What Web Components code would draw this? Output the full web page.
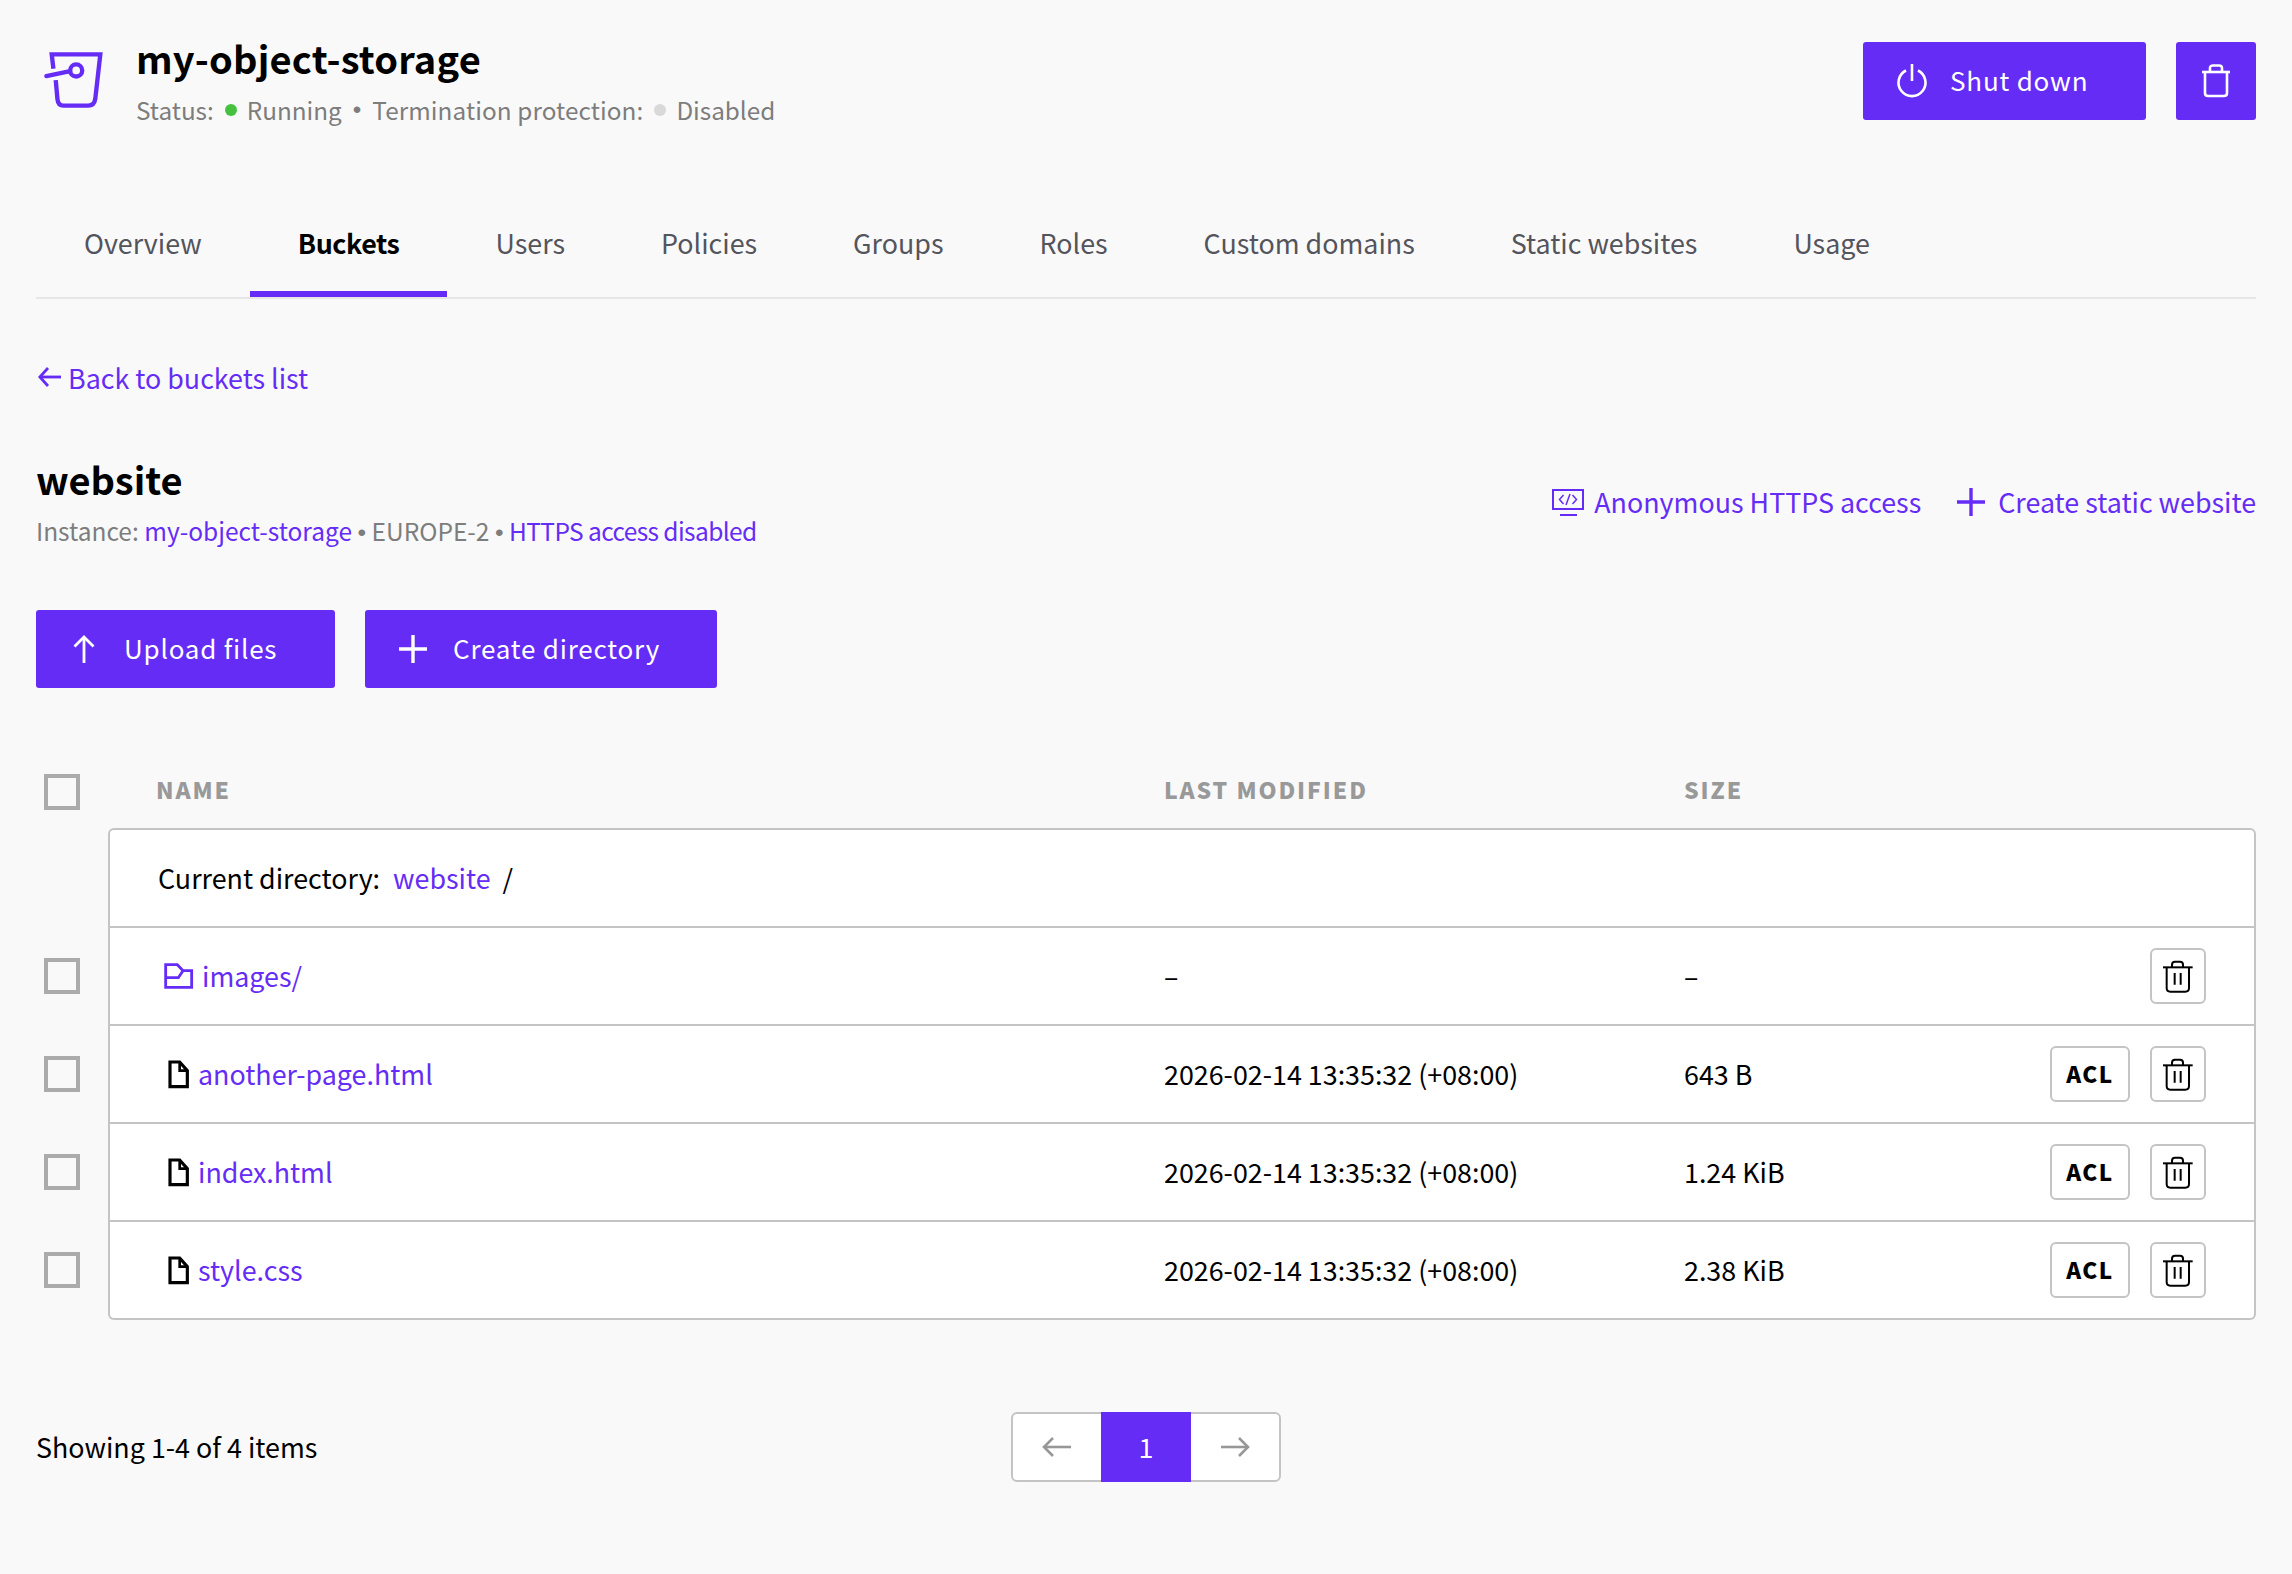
<!DOCTYPE html>
<html lang="en">
<head>
<meta charset="utf-8">
<title>my-object-storage</title>
<style>
  html, body { margin: 0; background: #f9f9f9; }
  body { font-family: "Noto Sans CJK SC", "Noto Sans", sans-serif; color: #000; }
</style>
</head>
<body>
<bucket-page></bucket-page>

<script>
const PURPLE = "#652cf6";
const FONT = '"Noto Sans CJK SC", "Noto Sans", sans-serif';
const BULLET = '<span style="font-family:\'Liberation Sans\',sans-serif">•</span>';

const ICONS = {
  logo: `<svg width="67" height="67" viewBox="60 80 200 200" fill="none" stroke="${PURPLE}" stroke-width="13" stroke-linecap="round"><path stroke-linecap="butt" d="M100 148 L95 105 H240 L225 238 Q222 258 204 258 H130 Q114 258 112 238 L107 182"/><path d="M79 170 L150 155"/><circle cx="168" cy="153" r="18"/></svg>`,
  power: `<svg width="32" height="34" viewBox="0 0 32 34" fill="none" stroke="#fff" stroke-width="2.6"><path d="M10 6.5 A13.5 13.5 0 1 0 22 6.5"/><path d="M16 0 V17"/></svg>`,
  trashWhite: `<svg width="30" height="34" viewBox="0 0 30 34" fill="none" stroke="#fff" stroke-width="2.6"><path d="M1 8 H29"/><path d="M4 8 V29 Q4 32 7 32 H23 Q26 32 26 29 V8"/><path d="M9 8 V4 Q9 1.5 12 1.5 H18 Q21 1.500 21 4 V8"/></svg>`,
  trash: `<svg width="34" height="35" viewBox="635 115 100 105" fill="none" stroke="#000" stroke-width="6"><path d="M640 140 H729"/><path d="M651 140 V202 Q651 213 662 213 H707 Q718 213 718 202 V140"/><path d="M667 140 V132 Q667 123 676 123 H691 Q700 123 700 132 V140"/><path d="M675 157 V192 M693 157 V192"/></svg>`,
  back: `<svg width="24" height="20" viewBox="0 0 24 20" fill="none" stroke="${PURPLE}" stroke-width="2.8"><path d="M23 10 H2"/><path d="M10 1 L1.800 10 L10 19"/></svg>`,
  up: `<svg width="22" height="28" viewBox="0 0 22 28" fill="none" stroke="#fff" stroke-width="2.8"><path d="M11 28 V2"/><path d="M1.500 11.500 L11 2 L20.500 11.500"/></svg>`,
  plusWhite: `<svg width="28" height="28" viewBox="0 0 28 28" fill="none" stroke="#fff" stroke-width="3.400"><path d="M0 14 H28 M14 0 V28"/></svg>`,
  plus: `<svg width="28" height="28" viewBox="0 0 28 28" fill="none" stroke="${PURPLE}" stroke-width="3.400"><path d="M0 14 H28 M14 0 V28"/></svg>`,
  monitor: `<svg width="32" height="27" viewBox="0 0 32 27" fill="none" stroke="${PURPLE}" stroke-width="2"><rect x="1" y="1" width="30" height="19"/><path d="M8 26 H25" stroke-width="2"/><path d="M11.500 6 L7.500 10.500 L11.500 15 M20.500 6 L24.500 10.500 L20.500 15 M18 5 L14 16" stroke-width="1.500"/></svg>`,
  folder: `<svg width="30" height="28" viewBox="70 39 90 84" fill="none" stroke="${PURPLE}" stroke-width="8.500"><path d="M75 115 V47 H110 L127 65 H153 V115 Z"/><path d="M75 86 H113 L127 65"/></svg>`,
  file: `<svg width="22" height="29" viewBox="83 328 66 87" fill="none" stroke="#000" stroke-width="9.500"><path d="M89 408 V334 H118 L141 360 V408 Z"/><path d="M118 334 V360 H141" stroke-width="8"/></svg>`,
  arrowLeft: `<svg width="30" height="22" viewBox="0 0 30 22" fill="none" stroke="#979797" stroke-width="2.600"><path d="M29 11 H2"/><path d="M11 2 L2 11 L11 20"/></svg>`,
  arrowRight: `<svg width="30" height="22" viewBox="0 0 30 22" fill="none" stroke="#979797" stroke-width="2.600"><path d="M1 11 H28"/><path d="M19 2 L28 11 L19 20"/></svg>`,
};

class BaseElement extends HTMLElement {
  constructor() {
    super();
    this.attachShadow({ mode: "open" });
  }
}

class UiButton extends BaseElement {
  connectedCallback() {
    const icon = this.getAttribute("icon");
    const gap = this.getAttribute("gap") || "28";
    this.shadowRoot.innerHTML = `
      <style>
        :host {
          display: inline-flex;
          align-items: center;
          box-sizing: border-box;
          height: 78px;
          background: ${PURPLE};
          border-radius: 3px;
          color: #fff;
          font: 400 26px/36px ${FONT};
          letter-spacing: 0.8px;
        }
        .icon { display: flex; margin-right: ${gap}px; }
        .label { margin-top: -2px; }
      </style>
      <span class="icon">${ICONS[icon]}</span><span class="label"><slot></slot></span>
    `;
  }
}
customElements.define("ui-button", UiButton);

class ObjHeader extends BaseElement {
  connectedCallback() {
    this.shadowRoot.innerHTML = `
      <style>
        :host { display: flex; align-items: flex-start; padding-top: 36px; height: 155px; box-sizing: border-box; }
        .logo { display: flex; margin: 10px 29px 0 4px; }
        .main { flex: 1; }
        h1 { margin: -2px 0 0; font: 700 38px/48px ${FONT}; letter-spacing: 0.2px; }
        .status { margin-top: 10px; display: flex; align-items: center; font-size: 24.3px; line-height: 36px; color: #7d7d7d; }
        .dot { width: 12px; height: 12px; border-radius: 50%; margin: 0 10px 0 11px; }
        .green { background: #46c13f; }
        .grey { background: #d9d9d9; }
        .sep { margin: 0 11px 0 11px; display: flex; }
        .term { letter-spacing: 0.1px; }
        .actions { display: flex; gap: 30px; margin-top: 6px; }
        .shut { width: 283px; padding-left: 33px; box-sizing: border-box; }
        .del { display: flex; align-items: center; justify-content: center; width: 80px; height: 78px; background: ${PURPLE}; border-radius: 3px; }
      </style>
      <span class="logo">${ICONS.logo}</span>
      <div class="main">
        <h1>my-object-storage</h1>
        <div class="status">
          <span>Status:</span><span class="dot green"></span><span>Running</span>
          <span class="sep">${BULLET}</span>
          <span class="term">Termination protection:</span><span class="dot grey"></span><span>Disabled</span>
        </div>
      </div>
      <div class="actions">
        <ui-button class="shut" icon="power" gap="22">Shut down</ui-button>
        <span class="del">${ICONS.trashWhite}</span>
      </div>
    `;
  }
}
customElements.define("obj-header", ObjHeader);

class ObjTabs extends BaseElement {
  connectedCallback() {
    const tabs = ["Overview", "Buckets", "Users", "Policies", "Groups", "Roles", "Custom domains", "Static websites", "Usage"];
    const active = this.getAttribute("active");
    this.shadowRoot.innerHTML = `
      <style>
        :host { display: flex; height: 108px; box-sizing: border-box; border-bottom: 2px solid #e6e6e6; margin-top: 36px; }
        a { display: block; padding: 34px 48px 0; height: 106px; box-sizing: border-box; font-size: 26.85px; line-height: 36px; color: #54545c; }
        a.on { color: #000; font-weight: 700; letter-spacing: -0.4px; border-bottom: 6px solid ${PURPLE}; }
      </style>
      ${tabs.map((t) => `<a class="${t === active ? "on" : ""}">${t}</a>`).join("")}
    `;
  }
}
customElements.define("obj-tabs", ObjTabs);

class BucketTitle extends BaseElement {
  connectedCallback() {
    this.shadowRoot.innerHTML = `
      <style>
        :host { display: block; color: ${PURPLE}; }
        .back { display: flex; align-items: center; gap: 6px; margin-top: 59px; font-size: 26.85px; line-height: 36px; }
        .back svg { margin-left: 2px; }
        .back span { padding-top: 2px; }
        .row { display: flex; align-items: center; justify-content: space-between; margin-top: 59px; }
        h2 { margin: 0; font: 700 38px/48px ${FONT}; color: #000; }
        .info { margin-top: 12px; font-size: 24.5px; line-height: 32px; color: #7d7d7d; }
        .info a { color: ${PURPLE}; }
        .info a.tight { letter-spacing: -0.6px; }
        .links { display: flex; align-items: center; font-size: 26.85px; line-height: 36px; }
        .links span { display: flex; align-items: center; }
        .anon { gap: 10px; margin-right: 36px; }
        .stat { gap: 13px; }
      </style>
      <div class="back">${ICONS.back}<span>Back to buckets list</span></div>
      <div class="row">
        <div>
          <h2>website</h2>
          <div class="info">Instance: <a>my-object-storage</a> ${BULLET} EUROPE-2 ${BULLET} <a class="tight">HTTPS access disabled</a></div>
        </div>
        <div class="links">
          <span class="anon">${ICONS.monitor}Anonymous HTTPS access</span>
          <span class="stat">${ICONS.plus}Create static website</span>
        </div>
      </div>
    `;
  }
}
customElements.define("bucket-title", BucketTitle);

class UiCheck extends BaseElement {
  connectedCallback() {
    this.shadowRoot.innerHTML = `
      <style>
        :host { display: block; width: 36px; height: 36px; box-sizing: border-box; border: 4px solid #ababab; margin-left: 8px; }
      </style>
    `;
  }
}
customElements.define("ui-check", UiCheck);

class FileRow extends BaseElement {
  connectedCallback() {
    const type = this.getAttribute("type");
    const name = this.getAttribute("name");
    const modified = this.getAttribute("modified");
    const size = this.getAttribute("size");
    const acl = this.hasAttribute("acl");
    const last = this.hasAttribute("last");
    this.shadowRoot.innerHTML = `
      <style>
        :host { display: grid; grid-template-columns: 72px 1fr; align-items: center; }
        ui-check { margin-top: -2px; }
        .cell {
          display: grid;
          grid-template-columns: 1054px 520px 1fr;
          align-items: center;
          height: 98px;
          box-sizing: border-box;
          background: #fff;
          border: solid #c4c4c4;
          border-width: 0 2px 2px 2px;
          font-size: 26.85px;
          line-height: 36px;
          ${last ? "border-radius: 0 0 6px 6px;" : ""}
        }
        .name { display: flex; align-items: center; color: ${PURPLE}; padding-left: 58px; gap: 8px; }
        .name.folder { padding-left: 54px; gap: 8px; }
        .size { grid-column: 3; grid-row: 1; }
        .actions { grid-column: 3; grid-row: 1; display: flex; justify-content: flex-end; gap: 20px; padding-right: 48px; }
        .btn {
          display: flex;
          align-items: center;
          justify-content: center;
          height: 56px;
          box-sizing: border-box;
          border: 2px solid #c4c4c4;
          border-radius: 6px;
          background: #fff;
        }
        .del { width: 56px; }
        .acl { width: 80px; padding-bottom: 2px; font-weight: 900; font-size: 22.500px; letter-spacing: 1.500px; }
      </style>
      <ui-check></ui-check>
      <div class="cell">
        <div class="name ${type}">${ICONS[type]}<span>${name}</span></div>
        <div>${modified}</div>
        <div class="size">${size}</div>
        <div class="actions">
          ${acl ? `<span class="btn acl">ACL</span>` : ""}
          <span class="btn del">${ICONS.trash}</span>
        </div>
      </div>
    `;
  }
}
customElements.define("file-row", FileRow);

class FileTable extends BaseElement {
  connectedCallback() {
    this.shadowRoot.innerHTML = `
      <style>
        :host { display: block; margin-top: 86px; }
        .head { display: grid; grid-template-columns: 72px 1056px 520px 1fr; height: 54px; font-weight: 900; font-size: 23px; line-height: 32px; letter-spacing: 1.900px; color: #999; }
        .head span { margin-top: -1px; }
        .head span:nth-child(2) { padding-left: 48px; }
        .dir {
          margin-left: 72px;
          height: 100px;
          box-sizing: border-box;
          display: flex;
          align-items: center;
          padding: 0 0 1px 48px;
          background: #fff;
          border: 2px solid #c4c4c4;
          border-radius: 6px 6px 0 0;
          font-size: 26.85px;
          line-height: 36px;
          white-space: pre;
        }
        .dir a { color: ${PURPLE}; margin: 0 6px 0 7px; }
      </style>
      <div class="head"><ui-check></ui-check><span>NAME</span><span>LAST MODIFIED</span><span>SIZE</span></div>
      <div class="dir">Current directory: <a>website</a> /</div>
      <slot></slot>
    `;
  }
}
customElements.define("file-table", FileTable);

class TableFooter extends BaseElement {
  connectedCallback() {
    this.shadowRoot.innerHTML = `
      <style>
        :host { display: grid; grid-template-columns: 1fr auto 1fr; align-items: center; margin-top: 92px; padding-bottom: 91px; font-size: 26.85px; line-height: 36px; }
        .pager { display: flex; width: 270px; height: 70px; box-sizing: border-box; border: 2px solid #c4c4c4; border-radius: 6px; background: #fff; }
        .pager span { flex: 1; display: flex; align-items: center; justify-content: center; }
        .pager .cur { flex: 0 0 90px; margin: -2px 0; background: ${PURPLE}; color: #fff; }
      </style>
      <div>Showing 1-4 of 4 items</div>
      <div class="pager"><span>${ICONS.arrowLeft}</span><span class="cur">1</span><span>${ICONS.arrowRight}</span></div>
      <div></div>
    `;
  }
}
customElements.define("table-footer", TableFooter);

class BucketPage extends BaseElement {
  connectedCallback() {
    this.shadowRoot.innerHTML = `
      <style>
        :host { display: block; padding: 0 36px; }
        .actions { display: flex; gap: 30px; margin-top: 61px; }
        .upload { width: 299px; padding-left: 37px; box-sizing: border-box; }
        .mkdir { width: 352px; padding-left: 34px; box-sizing: border-box; }
      </style>
      <obj-header></obj-header>
      <obj-tabs active="Buckets"></obj-tabs>
      <bucket-title></bucket-title>
      <div class="actions">
        <ui-button class="upload" icon="up" gap="29">Upload files</ui-button>
        <ui-button class="mkdir" icon="plusWhite" gap="26">Create directory</ui-button>
      </div>
      <file-table>
        <file-row type="folder" name="images/" modified="–" size="–"></file-row>
        <file-row type="file" name="another-page.html" modified="2026-02-14 13:35:32 (+08:00)" size="643 B" acl></file-row>
        <file-row type="file" name="index.html" modified="2026-02-14 13:35:32 (+08:00)" size="1.24 KiB" acl></file-row>
        <file-row type="file" name="style.css" modified="2026-02-14 13:35:32 (+08:00)" size="2.38 KiB" acl last></file-row>
      </file-table>
      <table-footer></table-footer>
    `;
  }
}
customElements.define("bucket-page", BucketPage);
</script>
</body>
</html>
